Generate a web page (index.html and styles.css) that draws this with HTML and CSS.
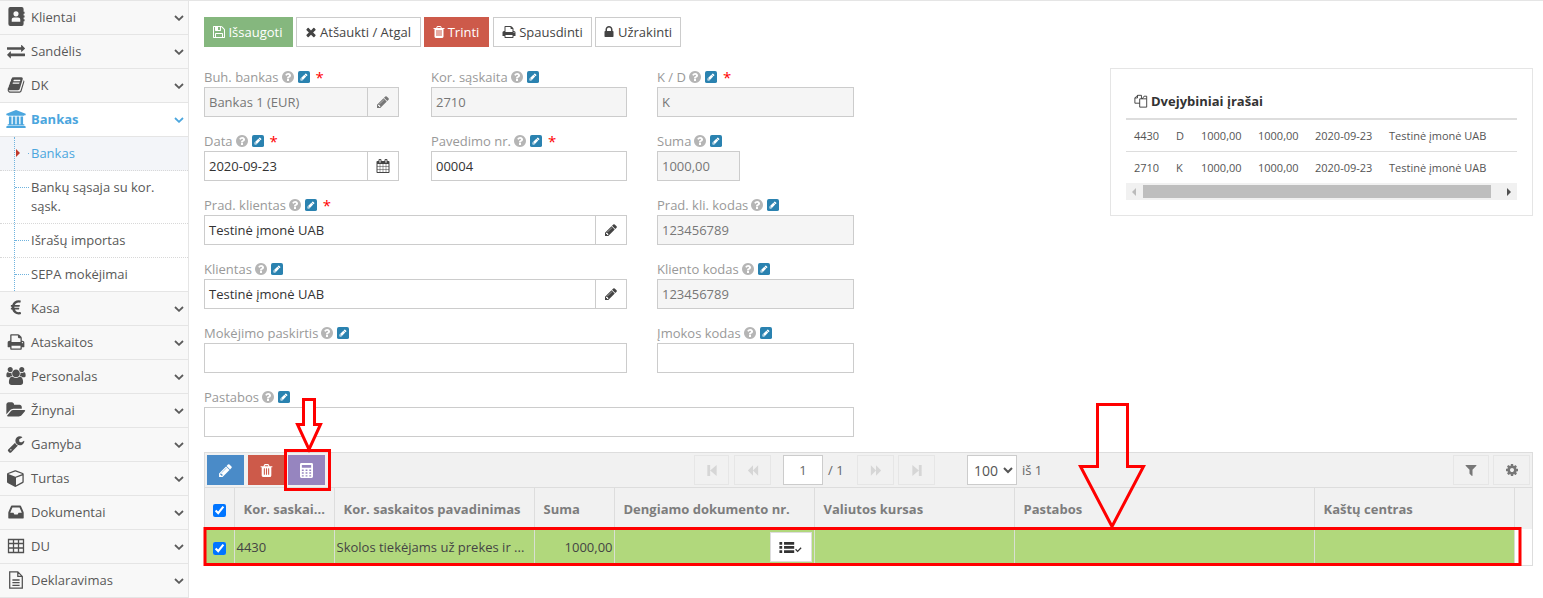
FILE: index.html
```html
<!DOCTYPE html>
<html lang="en">
<head>
    <meta charset="UTF-8">
    <title>Bankas</title>
    <link rel="stylesheet" href="styles.css">
</head>
<body>
    <svg class="defs" width="0" height="0">
        <symbol id="i-pencil" viewBox="0 0 1792 1792"><path d="M491 1536l91-91-235-235-91 91v107h128v128h107zm523-928q0-22-22-22-10 0-17 7l-542 542q-7 7-7 17 0 22 22 22 10 0 17-7l542-542q7-7 7-17zm-54-192l416 416-832 832h-416v-416zm683 96q0 53-37 90l-166 166-416-416 166-165q36-38 90-38 53 0 91 38l235 234q37 39 37 91z"/></symbol>
        <symbol id="i-edit" viewBox="0 0 1792 1792"><rect width="1792" height="1792" rx="280" fill="#2a82b0"/><path fill="#fff" transform="translate(290 270) scale(.68)" d="M491 1536l91-91-235-235-91 91v107h128v128h107zm469-1120l416 416-832 832h-416v-416zm683 96q0 53-37 90l-166 166-416-416 166-165q36-38 90-38 53 0 91 38l235 234q37 39 37 91z"/></symbol>
        <symbol id="i-help" viewBox="0 0 1792 1792"><path d="M1024 1376v-192q0-14-9-23t-23-9h-192q-14 0-23 9t-9 23v192q0 14 9 23t23 9h192q14 0 23-9t9-23zm256-672q0-88-55.500-163t-138.500-116-170-41q-243 0-371 213-15 24 8 42l132 100q7 6 19 6 16 0 25-12 53-68 86-92 34-24 86-24 48 0 85.500 26t37.500 59q0 38-20 61t-68 45q-63 28-115.500 86.500t-52.500 125.500v36q0 14 9 23t23 9h192q14 0 23-9t9-23q0-19 21.500-49.500t54.500-49.500q32-18 49-28.500t46-35 44.500-48 28-60.500 12.500-81zm384 192q0 209-103 385.500t-279.500 279.500-385.500 103-385.500-103-279.500-279.500-103-385.500 103-385.500 279.500-279.500 385.500-103 385.500 103 279.500 279.500 103 385.500z"/></symbol>
        <symbol id="i-save" viewBox="0 0 1792 1792"><path d="M512 1536h768v-384h-768v384zm896 0h128v-896q0-14-10-38.500t-20-34.500l-281-281q-10-10-34-20t-39-10v416q0 40-28 68t-68 28h-576q-40 0-68-28t-28-68v-416h-128v1280h128v-416q0-40 28-68t68-28h832q40 0 68 28t28 68v416zm-384-928v-320q0-13-9.500-22.500t-22.500-9.500h-192q-13 0-22.500 9.500t-9.500 22.500v320q0 13 9.500 22.500t22.500 9.500h192q13 0 22.500-9.500t9.500-22.500zm640 32v928q0 40-28 68t-68 28h-1344q-40 0-68-28t-28-68v-1344q0-40 28-68t68-28h928q40 0 88 20t76 48l280 280q28 28 48 76t20 88z"/></symbol>
        <symbol id="i-times" viewBox="0 0 1792 1792"><path d="M1490 1322q0 40-28 68l-136 136q-28 28-68 28t-68-28l-294-294-294 294q-28 28-68 28t-68-28l-136-136q-28-28-28-68t28-68l294-294-294-294q-28-28-28-68t28-68l136-136q28-28 68-28t68 28l294 294 294-294q28-28 68-28t68 28l136 136q28 28 28 68t-28 68l-294 294 294 294q28 28 28 68z"/></symbol>
        <symbol id="i-trash" viewBox="0 0 1792 1792"><path d="M704 1376v-704q0-14-9-23t-23-9h-64q-14 0-23 9t-9 23v704q0 14 9 23t23 9h64q14 0 23-9t9-23zm256 0v-704q0-14-9-23t-23-9h-64q-14 0-23 9t-9 23v704q0 14 9 23t23 9h64q14 0 23-9t9-23zm256 0v-704q0-14-9-23t-23-9h-64q-14 0-23 9t-9 23v704q0 14 9 23t23 9h64q14 0 23-9t9-23zm-544-992h448l-48-117q-7-9-17-11h-317q-10 2-17 11zm928 32v64q0 14-9 23t-23 9h-96v948q0 83-47 143.500t-113 60.500h-832q-66 0-113-58.500t-47-141.500v-952h-96q-14 0-23-9t-9-23v-64q0-14 9-23t23-9h309l70-167q15-37 54-63t79-26h320q40 0 79 26t54 63l70 167h309q14 0 23 9t9 23z"/></symbol>
        <symbol id="i-print" viewBox="0 0 1792 1792"><path d="M448 1536h896v-256h-896v256zm0-640h896v-384h-160q-40 0-68-28t-28-68v-160h-640v640zm1152 64q0-26-19-45t-45-19-45 19-19 45 19 45 45 19 45-19 19-45zm128 0v416q0 13-9.500 22.500t-22.500 9.500h-224v160q0 40-28 68t-68 28h-960q-40 0-68-28t-28-68v-160h-224q-13 0-22.500-9.500t-9.500-22.500v-416q0-79 56.500-135.500t135.500-56.500h64v-544q0-40 28-68t68-28h672q40 0 88 20t76 48l152 152q28 28 48 76t20 88v256h64q79 0 135.500 56.500t56.500 135.500z"/></symbol>
        <symbol id="i-lock" viewBox="0 0 1792 1792"><path d="M640 768h512v-192q0-106-75-181t-181-75-181 75-75 181v192zm832 96v576q0 40-28 68t-68 28h-960q-40 0-68-28t-28-68v-576q0-40 28-68t68-28h32v-192q0-184 132-316t316-132 316 132 132 316v192h32q40 0 68 28t28 68z"/></symbol>
        <symbol id="i-calendar" viewBox="0 0 1792 1792"><path d="M192 1664h288v-288h-288v288zm352 0h320v-288h-320v288zm-352-352h288v-320h-288v320zm352 0h320v-320h-320v320zm-352-384h288v-288h-288v288zm736 736h320v-288h-320v288zm-384-736h320v-288h-320v288zm768 736h288v-288h-288v288zm-384-352h320v-320h-320v320zm-352-864v-288q0-13-9.500-22.500t-22.500-9.500h-64q-13 0-22.500 9.500t-9.500 22.500v288q0 13 9.500 22.500t22.500 9.500h64q13 0 22.500-9.500t9.500-22.500zm736 864h288v-320h-288v320zm-384-384h320v-288h-320v288zm384 0h288v-288h-288v288zm32-480v-288q0-13-9.500-22.500t-22.500-9.500h-64q-13 0-22.500 9.500t-9.500 22.500v288q0 13 9.500 22.500t22.500 9.500h64q13 0 22.500-9.500t9.500-22.500zm384-64v1280q0 52-38 90t-90 38h-1408q-52 0-90-38t-38-90v-1280q0-52 38-90t90-38h128v-96q0-66 47-113t113-47h64q66 0 113 47t47 113v96h384v-96q0-66 47-113t113-47h64q66 0 113 47t47 113v96h128q52 0 90 38t38 90z"/></symbol>
        <symbol id="i-contact" viewBox="0 0 18 20"><path fill-rule="evenodd" d="M3 0h12a2 2 0 0 1 2 2v3h1v2h-1v2h1v2h-1v2h1v2h-1v3a2 2 0 0 1-2 2H3a2 2 0 0 1-2-2V2a2 2 0 0 1 2-2zm6 4.500a2.700 2.700 0 1 0 0 5.400 2.700 2.700 0 0 0 0-5.400zM4.500 15.500h9v-2.300c0-1.300-1-2.200-2.300-2.200H6.800c-1.300 0-2.300.9-2.300 2.200z"/></symbol>
        <symbol id="i-exchange" viewBox="0 0 1792 1792"><path d="M1792 1184v192q0 13-9.500 22.500t-22.500 9.500h-1376v192q0 13-9.500 22.500t-22.500 9.500q-12 0-24-10l-319-320q-9-9-9-22 0-14 9-23l320-320q9-9 23-9 13 0 22.500 9.500t9.500 22.500v192h1376q13 0 22.500 9.500t9.500 22.500zm0-544q0 14-9 23l-320 320q-9 9-23 9-13 0-22.500-9.500t-9.500-22.500v-192h-1376q-13 0-22.500-9.500t-9.500-22.500v-192q0-13 9.500-22.500t22.500-9.500h1376v-192q0-14 9-23t23-9q12 0 24 10l319 319q9 9 9 23z"/></symbol>
        <symbol id="i-book" viewBox="0 0 1792 1792"><path d="M1703 478q40 57 18 129l-275 906q-19 64-76.500 107.500t-122.500 43.500h-923q-77 0-148.500-53.500t-99.500-131.500q-24-67-2-127 0-4 3-27t4-37q1-8-3-21.500t-3-19.500q2-11 8-21t16.500-23.500 16.500-23.500q23-38 45-91.500t30-91.500q3-10 .5-30t-.5-28q3-11 17-28t17-23q21-36 42-92t25-90q1-9-2.500-32t.5-28q4-13 22-30.500t22-22.500q19-26 42.500-84.500t27.500-96.500q1-8-3-25.500t-2-26.500q2-8 9-18t18-23 17-21q8-12 16.500-30.500t15-35 16-36 19.500-32 26.500-23.500 36-11.500 47.500 5.500l-1 3q38-9 51-9h761q74 0 114 56t18 130l-274 906q-36 119-71.500 153.500t-128.500 34.500h-869q-27 0-38 15-11 16-1 43 24 70 144 70h923q29 0 56-15.500t35-41.500l300-987q7-22 5-57 38 15 59 43zm-1064 2q-4 13 2 22.500t20 9.500h608q13 0 25.500-9.500t16.500-22.500l21-64q4-13-2-22.500t-20-9.500h-608q-13 0-25.500 9.500t-16.500 22.500zm-83 256q-4 13 2 22.500t20 9.500h608q13 0 25.500-9.500t16.500-22.500l21-64q4-13-2-22.500t-20-9.500h-608q-13 0-25.500 9.500t-16.500 22.500z"/></symbol>
        <symbol id="i-bank" viewBox="0 0 1920 1792"><path d="M960 0l960 384v128h-128q0 26-20.500 45t-48.500 19h-1526q-28 0-48.500-19t-20.500-45h-128v-128zm-704 640h256v768h128v-768h256v768h128v-768h256v768h128v-768h256v768h59q28 0 48.500 19t20.500 45v64h-1664v-64q0-26 20.500-45t48.500-19h59v-768zm1595 960q28 0 48.500 19t20.500 45v128h-1920v-128q0-26 20.500-45t48.500-19h1782z"/></symbol>
        <symbol id="i-euro" viewBox="0 0 1792 1792"><path d="M1360 1307l35 159q3 12-3 22.500t-17 14.500l-5 1q-4 2-10.500 3.500t-16 4.500-21.500 5.500-25.500 5-30 5-33.500 4.500-36.500 3-38.500 1q-234 0-409-130.500t-238-351.500h-95q-13 0-22.500-9.500t-9.500-22.500v-113q0-13 9.500-22.500t22.500-9.500h66q-2-57 1-105h-67q-14 0-23-9t-9-23v-114q0-14 9-23t23-9h98q67-210 243.500-338t400.500-128q102 0 194 23 11 3 20 15 6 11 3 24l-43 159q-3 13-14 19.500t-24 2.500l-4-1q-4-1-11.500-2.500l-17.500-3.500-22.500-3.500-26-3-29-2.500-29.500-1q-126 0-226 64t-150 176h468q16 0 25 12 10 12 7 26l-24 114q-5 26-32 26h-488q-3 47 0 105h459q15 0 25 12 9 12 6 27l-24 112q-2 11-11 18.500t-20 7.500h-387q48 117 149.500 185.500t228.500 68.500q18 0 36-1.500t33.500-3.500 29.500-4.500 24.500-5 18.500-4.500l12-3 5-2q13-5 26 2 12 7 15 21z"/></symbol>
        <symbol id="i-users" viewBox="0 0 1920 1792"><path d="M593 896q-162 5-265 128h-134q-82 0-138-40.500t-56-118.500q0-353 124-353 6 0 43.500 21t97.500 42.500 119 21.500q67 0 133-23-5 37-5 66 0 139 81 256zm1071 637q0 120-73 189.500t-194 69.500h-874q-121 0-194-69.500t-73-189.500q0-53 3.500-103.500t14-109 26.500-108.500 43-97.500 62-81 85.500-53.500 111.500-20q10 0 43 21.500t73 48 107 48 135 21.500 135-21.500 107-48 73-48 43-21.500q61 0 111.500 20t85.500 53.500 62 81 43 97.500 26.500 108.500 14 109 3.500 103.500zm-1024-1277q0 106-75 181t-181 75-181-75-75-181 75-181 181-75 181 75 75 181zm704 384q0 159-112.500 271.500t-271.500 112.500-271.500-112.500-112.500-271.500 112.500-271.500 271.500-112.500 271.500 112.500 112.500 271.500zm576 225q0 78-56 118.500t-138 40.500h-134q-103-123-265-128 81-117 81-256 0-29-5-66 66 23 133 23 59 0 119-21.500t97.500-42.500 43.500-21q124 0 124 353zm-128-609q0 106-75 181t-181 75-181-75-75-181 75-181 181-75 181 75 75 181z"/></symbol>
        <symbol id="i-folder" viewBox="0 0 1920 1792"><path d="M1879 952q0 31-31 66l-336 396q-43 51-120.500 86.500t-143.500 35.500h-1088q-34 0-60.500-13t-26.500-43q0-31 31-66l336-396q43-51 120.500-86.500t143.500-35.500h1088q34 0 60.500 13t26.500 43zm-343-344v160h-832q-94 0-197 47.500t-164 119.500l-337 396-5 6q0-4-.5-12.500t-.5-12.500v-960q0-92 66-158t158-66h320q92 0 158 66t66 158v32h544q92 0 158 66t66 158z"/></symbol>
        <symbol id="i-wrench" viewBox="0 0 1792 1792"><path d="M448 1472q0-26-19-45t-45-19-45 19-19 45 19 45 45 19 45-19 19-45zm644-420l-682 682q-37 37-90 37-52 0-91-37l-106-108q-38-36-38-90 0-53 38-91l681-681q39 98 114.500 173.500t173.500 114.500zm634-435q0 39-23 106-47 134-164.500 217.500t-258.500 83.500q-185 0-316.500-131.500t-131.500-316.500 131.500-316.500 316.500-131.500q58 0 121.500 16.500t107.500 46.500q16 11 16 28t-16 28l-293 169v224l193 107q5-3 79-48.500t135.500-81 70.500-35.500q15 0 23.500 10t8.500 25z"/></symbol>
        <symbol id="i-cube" viewBox="0 0 1792 1792"><path d="M896 1629l640-349v-636l-640 233v752zm-64-865l698-254-698-254-698 254zm832-252v768q0 35-18 65t-49 47l-704 384q-28 16-61 16t-61-16l-704-384q-31-17-49-47t-18-65v-768q0-40 23-73t61-47l704-256q22-8 44-8t44 8l704 256q38 14 61 47t23 73z"/></symbol>
        <symbol id="i-inbox" viewBox="0 0 1792 1792"><path d="M1151 960h316q-1-3-2.500-8.500t-2.500-7.500l-212-496h-708l-212 496q-1 3-2.500 8.500t-2.500 7.500h316l95 192h320zm513 30v482q0 26-19 45t-45 19h-1408q-26 0-45-19t-19-45v-482q0-62 25-123l238-552q10-25 36.500-42t52.500-17h832q26 0 52.500 17t36.500 42l238 552q25 61 25 123z"/></symbol>
        <symbol id="i-table" viewBox="0 0 18 18"><path fill="none" stroke="currentColor" stroke-width="1.300" d="M1.500 2.500h15v13h-15zM1.500 6.500h15M1.500 11h15M6.500 2.500v13M11.500 2.500v13"/></symbol>
        <symbol id="i-file" viewBox="0 0 18 20"><path fill="none" stroke="currentColor" stroke-width="1.400" d="M2 1h9l5 5v13H2zM11 1v5h5M5 10h8M5 13h8M5 16h8"/></symbol>
        <symbol id="i-files" viewBox="0 0 16 16"><path fill="none" stroke="currentColor" stroke-width="1" d="M6.500 5.500h8v9.500h-8zM6.500 10.500H1V4.500L4 1.500h4.500v4M4 1.500v3H1M9.500 5.500l2-3h3v3"/></symbol>
        <symbol id="i-calc" viewBox="0 0 14 16"><path fill-rule="evenodd" d="M1.500 0h11A1.500 1.500 0 0 1 14 1.500v13a1.500 1.500 0 0 1-1.500 1.500h-11A1.500 1.500 0 0 1 0 14.500v-13A1.500 1.500 0 0 1 1.500 0zM2 2v3h10V2zm0 5v1.500h2V7zm4 0v1.500h2V7zm4 0v1.500h2V7zM2 10v1.500h2V10zm4 0v1.500h2V10zm4 0v1.500h2V10zM2 13v1.500h2V13zm4 0v1.500h2V13zm4 0v1.500h2V13z"/></symbol>
        <symbol id="i-first" viewBox="0 0 12 14"><path d="M1 1h3v12H1zM4 7l7-6v12z"/></symbol>
        <symbol id="i-prev" viewBox="0 0 14 14"><path d="M1 7l6-6v12zM7 7l6-6v12z"/></symbol>
        <symbol id="i-next" viewBox="0 0 14 14"><path d="M13 7L7 1v12zM7 7L1 1v12z"/></symbol>
        <symbol id="i-last" viewBox="0 0 12 14"><path d="M11 1H8v12h3zM8 7L1 1v12z"/></symbol>
        <symbol id="i-filter" viewBox="0 0 1792 1792"><path d="M1595 295q17 41-14 70l-493 493v742q0 42-39 59-13 5-25 5-27 0-45-19l-256-256q-19-19-19-45v-486l-493-493q-31-29-14-70 17-39 59-39h1280q42 0 59 39z"/></symbol>
        <symbol id="i-cog" viewBox="0 0 1792 1792"><path d="M1152 896q0-106-75-181t-181-75-181 75-75 181 75 181 181 75 181-75 75-181zm512-109v222q0 12-8 23t-20 13l-185 28q-19 54-39 91 35 50 107 138 10 12 10 25t-9 23q-27 37-99 108t-94 71q-12 0-26-9l-138-108q-44 23-91 38-16 136-29 186-7 28-36 28h-222q-14 0-24.500-8.500t-11.500-21.500l-28-184q-49-16-90-37l-141 107q-10 9-25 9-14 0-25-11-126-114-165-168-7-10-7-23 0-12 8-23 15-21 51-66.500t54-70.500q-27-50-41-99l-183-27q-13-2-21-12.500t-8-23.500v-222q0-12 8-23t19-13l186-28q14-46 39-92-40-57-107-138-10-12-10-24 0-10 9-23 26-36 98.500-107.500t94.500-71.500q13 0 26 10l138 107q44-23 91-38 16-136 29-186 7-28 36-28h222q14 0 24.500 8.500t11.500 21.500l28 184q49 16 90 37l142-107q9-9 24-9 13 0 25 10 129 119 165 170 7 8 7 22 0 12-8 23-15 21-51 66.500t-54 70.500q26 50 41 98l183 28q13 2 21 12.500t8 23.500z"/></symbol>
        <symbol id="i-listcheck" viewBox="0 0 24 13"><path d="M0 1h3v3H0zM5 1h11v3H5zM0 5.500h3v3H0zM5 5.500h11v3H5zM0 10h3v3H0zM5 10h11v3H5z"/><path fill="none" stroke="currentColor" stroke-width="1.400" d="M17.500 9l2.200 2.300 3.800-4"/></symbol>
        <symbol id="i-chev" viewBox="0 0 10 6"><path fill="none" stroke="currentColor" stroke-width="1.800" d="M1 1l4 3.800L9 1"/></symbol>
    </svg>

    <div class="page">
        <nav class="sidebar">
            <a class="nav-item"><span class="nav-icon"><svg class="ic-contact"><use href="#i-contact"/></svg></span>Klientai<svg class="chev"><use href="#i-chev"/></svg></a>
            <a class="nav-item"><span class="nav-icon"><svg><use href="#i-exchange"/></svg></span>Sandėlis<svg class="chev"><use href="#i-chev"/></svg></a>
            <a class="nav-item"><span class="nav-icon"><svg><use href="#i-book"/></svg></span>DK<svg class="chev"><use href="#i-chev"/></svg></a>
            <a class="nav-item open"><span class="nav-icon"><svg class="ic-wide"><use href="#i-bank"/></svg></span>Bankas<svg class="chev"><use href="#i-chev"/></svg></a>
            <div class="submenu">
                <a class="sub-item active">Bankas</a>
                <a class="sub-item">Bankų sąsaja su kor. sąsk.</a>
                <a class="sub-item">Išrašų importas</a>
                <a class="sub-item">SEPA mokėjimai</a>
            </div>
            <a class="nav-item"><span class="nav-icon"><svg><use href="#i-euro"/></svg></span>Kasa<svg class="chev"><use href="#i-chev"/></svg></a>
            <a class="nav-item"><span class="nav-icon"><svg><use href="#i-print"/></svg></span>Ataskaitos<svg class="chev"><use href="#i-chev"/></svg></a>
            <a class="nav-item"><span class="nav-icon"><svg class="ic-wide"><use href="#i-users"/></svg></span>Personalas<svg class="chev"><use href="#i-chev"/></svg></a>
            <a class="nav-item"><span class="nav-icon"><svg class="ic-wide"><use href="#i-folder"/></svg></span>Žinynai<svg class="chev"><use href="#i-chev"/></svg></a>
            <a class="nav-item"><span class="nav-icon"><svg><use href="#i-wrench"/></svg></span>Gamyba<svg class="chev"><use href="#i-chev"/></svg></a>
            <a class="nav-item"><span class="nav-icon"><svg><use href="#i-cube"/></svg></span>Turtas<svg class="chev"><use href="#i-chev"/></svg></a>
            <a class="nav-item"><span class="nav-icon"><svg><use href="#i-inbox"/></svg></span>Dokumentai<svg class="chev"><use href="#i-chev"/></svg></a>
            <a class="nav-item"><span class="nav-icon"><svg><use href="#i-table"/></svg></span>DU<svg class="chev"><use href="#i-chev"/></svg></a>
            <a class="nav-item"><span class="nav-icon"><svg><use href="#i-file"/></svg></span>Deklaravimas<svg class="chev"><use href="#i-chev"/></svg></a>
        </nav>

        <main class="content">
            <div class="actions">
                <button class="btn btn-save"><svg><use href="#i-save"/></svg>Išsaugoti</button>
                <button class="btn btn-cancel"><svg><use href="#i-times"/></svg>Atšaukti / Atgal</button>
                <button class="btn btn-delete"><svg><use href="#i-trash"/></svg>Trinti</button>
                <button class="btn btn-print"><svg><use href="#i-print"/></svg>Spausdinti</button>
                <button class="btn btn-lock"><svg><use href="#i-lock"/></svg>Užrakinti</button>
            </div>

            <div class="top-row">
                <div class="form-grid">
                    <div class="field">
                        <div class="label">Buh. bankas<svg class="q"><use href="#i-help"/></svg><svg class="e"><use href="#i-edit"/></svg><span class="req">*</span></div>
                        <div class="input-group w195 disabled"><div class="input">Bankas 1 (EUR)</div><span class="addon"><svg><use href="#i-pencil"/></svg></span></div>
                    </div>
                    <div class="field">
                        <div class="label">Kor. sąskaita<svg class="q"><use href="#i-help"/></svg><svg class="e"><use href="#i-edit"/></svg></div>
                        <div class="input w196 disabled">2710</div>
                    </div>
                    <div class="field">
                        <div class="label">K / D<svg class="q"><use href="#i-help"/></svg><svg class="e"><use href="#i-edit"/></svg><span class="req">*</span></div>
                        <div class="input w197 disabled">K</div>
                    </div>

                    <div class="field">
                        <div class="label">Data<svg class="q"><use href="#i-help"/></svg><svg class="e"><use href="#i-edit"/></svg><span class="req">*</span></div>
                        <div class="input-group w195"><div class="input">2020-09-23</div><span class="addon"><svg><use href="#i-calendar"/></svg></span></div>
                    </div>
                    <div class="field">
                        <div class="label">Pavedimo nr.<svg class="q"><use href="#i-help"/></svg><svg class="e"><use href="#i-edit"/></svg><span class="req">*</span></div>
                        <div class="input w196">00004</div>
                    </div>
                    <div class="field">
                        <div class="label">Suma<svg class="q"><use href="#i-help"/></svg><svg class="e"><use href="#i-edit"/></svg></div>
                        <div class="input w83 disabled">1000,00</div>
                    </div>

                    <div class="field span2">
                        <div class="label">Prad. klientas<svg class="q"><use href="#i-help"/></svg><svg class="e"><use href="#i-edit"/></svg><span class="req">*</span></div>
                        <div class="input-group w423"><div class="input">Testinė įmonė UAB</div><span class="addon"><svg><use href="#i-pencil"/></svg></span></div>
                    </div>
                    <div class="field">
                        <div class="label">Prad. kli. kodas<svg class="q"><use href="#i-help"/></svg><svg class="e"><use href="#i-edit"/></svg></div>
                        <div class="input w197 disabled">123456789</div>
                    </div>

                    <div class="field span2">
                        <div class="label">Klientas<svg class="q"><use href="#i-help"/></svg><svg class="e"><use href="#i-edit"/></svg></div>
                        <div class="input-group w423"><div class="input">Testinė įmonė UAB</div><span class="addon"><svg><use href="#i-pencil"/></svg></span></div>
                    </div>
                    <div class="field">
                        <div class="label">Kliento kodas<svg class="q"><use href="#i-help"/></svg><svg class="e"><use href="#i-edit"/></svg></div>
                        <div class="input w197 disabled">123456789</div>
                    </div>

                    <div class="field span2">
                        <div class="label">Mokėjimo paskirtis<svg class="q"><use href="#i-help"/></svg><svg class="e"><use href="#i-edit"/></svg></div>
                        <div class="input w423"></div>
                    </div>
                    <div class="field">
                        <div class="label">Įmokos kodas<svg class="q"><use href="#i-help"/></svg><svg class="e"><use href="#i-edit"/></svg></div>
                        <div class="input w197"></div>
                    </div>

                    <div class="field span3">
                        <div class="label">Pastabos<svg class="q"><use href="#i-help"/></svg><svg class="e"><use href="#i-edit"/></svg></div>
                        <div class="input"></div>
                    </div>
                </div>

                <aside class="entries">
                    <div class="entries-title"><svg><use href="#i-files"/></svg>Dvejybiniai įrašai</div>
                    <table class="entries-table">
                        <tr><td class="c1">4430</td><td class="c2">D</td><td class="c3">1000,00</td><td class="c3">1000,00</td><td class="c4">2020-09-23</td><td>Testinė įmonė UAB</td></tr>
                        <tr><td class="c1">2710</td><td class="c2">K</td><td class="c3">1000,00</td><td class="c3">1000,00</td><td class="c4">2020-09-23</td><td>Testinė įmonė UAB</td></tr>
                    </table>
                    <div class="scrollbar"><span class="arrow-l"></span><span class="thumb"></span><span class="arrow-r"></span></div>
                </aside>
            </div>

            <section class="grid-panel">
                <div class="grid-toolbar">
                    <div class="tool-group">
                        <button class="tool tool-blue"><svg><use href="#i-pencil"/></svg></button>
                        <button class="tool tool-red"><svg><use href="#i-trash"/></svg></button>
                        <button class="tool tool-purple"><svg class="ic-calc"><use href="#i-calc"/></svg></button>
                    </div>
                    <div class="pager">
                        <button class="page-btn page-first"><svg><use href="#i-first"/></svg></button>
                        <button class="page-btn page-prev"><svg><use href="#i-prev"/></svg></button>
                        <div class="page-input">1</div>
                        <span class="page-total">/ 1</span>
                        <button class="page-btn"><svg><use href="#i-next"/></svg></button>
                        <button class="page-btn page-last"><svg><use href="#i-last"/></svg></button>
                        <select class="page-size"><option>100</option></select>
                        <span class="page-count">iš 1</span>
                    </div>
                    <div class="tool-right">
                        <button class="page-btn dark"><svg><use href="#i-filter"/></svg></button>
                        <button class="page-btn dark"><svg><use href="#i-cog"/></svg></button>
                    </div>
                </div>
                <table class="grid">
                    <colgroup><col class="col-check"><col class="col-acc"><col class="col-name"><col class="col-sum"><col class="col-doc"><col class="col-rate"><col class="col-note"><col class="col-cost"></colgroup>
                    <thead>
                        <tr>
                            <th class="cell-check"><input type="checkbox" checked></th>
                            <th>Kor. saskai...</th>
                            <th>Kor. saskaitos pavadinimas</th>
                            <th>Suma</th>
                            <th>Dengiamo dokumento nr.</th>
                            <th>Valiutos kursas</th>
                            <th>Pastabos</th>
                            <th>Kaštų centras</th>
                        </tr>
                    </thead>
                    <tbody>
                        <tr>
                            <td class="cell-check"><input type="checkbox" checked></td>
                            <td>4430</td>
                            <td>Skolos tiekėjams už prekes ir ...</td>
                            <td class="num">1000,00</td>
                            <td class="cell-btn"><button class="doc-btn"><svg><use href="#i-listcheck"/></svg></button></td>
                            <td></td>
                            <td></td>
                            <td></td>
                        </tr>
                    </tbody>
                </table>
            </section>
        </main>
    </div>

    <!-- red marks drawn over the screenshot -->
    <svg class="marks" width="1543" height="598">
        <g fill="none" stroke="#f00" stroke-width="3">
            <path fill="#fff" d="M303.500 399.500h11v25h6l-11.500 25-11.500-25h6z"/>
            <path d="M285.500 450.500h44v39h-44z"/>
            <path d="M1097.500 404.500h30v62h16l-31.500 60-31.500-60h17z"/>
            <path d="M205 528.500h1315v36H205z"/>
        </g>
    </svg>
</body>
</html>
```

FILE: styles.css
```css
* {
    box-sizing: border-box;
}

html, body {
    margin: 0;
    height: 598px;
    overflow: hidden;
}

body {
    position: relative;
    background: white;
    color: #444;
    font-family: 'Open Sans', sans-serif;
    font-size: 13px;
}

svg {
    fill: currentColor;
}

.defs {
    position: absolute;
}

.page {
    display: flex;
    height: 598px;
    border-top: 1px solid #e5e5e5;
}

/* Sidebar */
.sidebar {
    width: 189px;
    flex: none;
    background: #f8f8f8;
    border-right: 1px solid #e5e5e5;
}

.nav-item {
    display: flex;
    align-items: center;
    height: 34px;
    padding: 0 0 2px 6px;
    border-bottom: 1px solid #e5e5e5;
    color: #585858;
}

.nav-icon {
    width: 25px;
    flex: none;
    display: flex;
    align-items: center;
    justify-content: flex-start;
    color: #505050;
}

.nav-icon svg {
    width: 18px;
    height: 18px;
    margin-left: 1px;
}

.nav-icon .ic-wide {
    width: 20px;
    margin-left: 0;
}

.nav-icon .ic-contact {
    height: 19px;
    margin-left: 1px;
}

.chev {
    width: 10px;
    height: 6px;
    margin-left: auto;
    margin-right: 4px;
    margin-top: 3px;
    color: #5a5a5a;
}

.nav-item.open {
    background: white;
    color: #4ba6de;
    font-weight: bold;
}

.nav-item.open .nav-icon,
.nav-item.open .chev {
    color: #4ba6de;
}

.submenu {
    position: relative;
    background: white;
    border-bottom: 1px solid #e5e5e5;
}

.submenu::before {
    content: '';
    position: absolute;
    z-index: 1;
    left: 14px;
    top: 0;
    bottom: 0;
    border-left: 1px dotted #6fb3de;
}

.sub-item {
    position: relative;
    display: block;
    padding: 7px 8px 7px 31px;
    line-height: 19px;
    color: #585858;
    border-bottom: 1px dotted #d8d8d8;
}

.sub-item:last-child {
    border-bottom: none;
}

.sub-item::before {
    content: '';
    position: absolute;
    left: 15px;
    top: 16px;
    width: 14px;
    border-top: 1px dotted #6fb3de;
}

.sub-item.active {
    background: #f3f5f9;
    color: #4ba6de;
}

.sub-item.active::before {
    left: 28px;
    width: 1px;
}

.sub-item.active::after {
    content: '';
    position: absolute;
    left: 16px;
    top: 12px;
    border-left: 4px solid #c0392b;
    border-top: 4px solid transparent;
    border-bottom: 4px solid transparent;
}

/* Main area */
.content {
    flex: 1;
    min-width: 0;
    padding: 16px 10px 0 15px;
}

.actions {
    display: flex;
    gap: 3px;
    height: 30px;
    margin-bottom: 20px;
}

.btn {
    display: flex;
    align-items: center;
    justify-content: center;
    gap: 2px;
    height: 30px;
    padding: 0 2px 0 0;
    border: 1px solid #ccc;
    background: white;
    color: #444;
    font: inherit;
}

.btn svg {
    width: 14px;
    height: 14px;
}

.btn-save {
    width: 89px;
    background: #85b77e;
    border-color: #85b77e;
    color: white;
}

.btn-cancel { width: 125px; }

.btn-delete {
    width: 65px;
    background: #cd5a4a;
    border-color: #cd5a4a;
    color: white;
}

.btn-print {
    width: 99px;
    margin-left: 1px;
    gap: 3px;
    padding: 0;
}

.btn-lock { width: 86px; }

.top-row {
    display: flex;
}

.form-grid {
    display: grid;
    grid-template-columns: 227px 226px 197px;
    grid-auto-rows: 50px;
    row-gap: 14px;
    width: 650px;
}

.span2 { grid-column: span 2; }
.span3 { grid-column: span 3; }

.label {
    display: flex;
    align-items: center;
    height: 20px;
    color: #999;
}

.label .q {
    width: 14px;
    height: 14px;
    margin-left: 2px;
    color: #b5b5b5;
}

.label .e {
    width: 12px;
    height: 12px;
    margin-left: 3px;
}

.req {
    margin-left: 6px;
    color: #f00;
    font-size: 15px;
    line-height: 20px;
}

.input {
    height: 30px;
    padding-left: 4px;
    border: 1px solid #ccc;
    background: white;
    color: #333;
    line-height: 28px;
    white-space: nowrap;
}

.input.disabled,
.input-group.disabled .input,
.input-group.disabled .addon {
    background: #f5f5f5;
    color: #777;
}

.w83 { width: 83px; }
.w195 { width: 195px; }
.w196 { width: 196px; }
.w197 { width: 197px; }
.w423 { width: 423px; }

.input-group {
    display: flex;
}

.input-group .input {
    flex: 1;
    min-width: 0;
}

.addon {
    display: flex;
    align-items: center;
    justify-content: center;
    width: 31px;
    height: 30px;
    flex: none;
    border: 1px solid #ccc;
    border-left: none;
    color: #444;
}

.addon svg {
    width: 14px;
    height: 14px;
}

.input-group.disabled .addon svg {
    color: #777;
}

/* Double entry panel */
.entries {
    width: 423px;
    height: 148px;
    margin-top: 1px;
    margin-left: auto;
    padding: 16px 15px 15px;
    border: 1px solid #e5e5e5;
}

.entries-title {
    display: flex;
    align-items: center;
    gap: 3px;
    height: 35px;
    padding: 0 0 2px 8px;
    border-bottom: 2px solid #ddd;
    color: #333;
    font-weight: bold;
}

.entries-title svg {
    width: 14px;
    height: 14px;
}

.entries-table {
    width: 391px;
    border-collapse: collapse;
    table-layout: fixed;
    font-size: 11px;
    color: #555;
}

.entries-table td {
    height: 32px;
    padding: 0 0 0 8px;
    white-space: nowrap;
}

.entries-table tr:first-child td {
    height: 31px;
    border-bottom: 1px solid #ddd;
}

.entries-table .c1 { width: 42px; }
.entries-table .c2 { width: 25px; }
.entries-table .c3 { width: 57px; }
.entries-table .c4 { width: 74px; }

.scrollbar {
    display: flex;
    align-items: center;
    height: 17px;
    padding: 0 6px;
    background: #f1f1f1;
}

.thumb {
    width: 348px;
    height: 13px;
    margin-left: 7px;
    background: #bebebe;
}

.arrow-l {
    border-right: 4px solid #bbb;
    border-top: 4px solid transparent;
    border-bottom: 4px solid transparent;
}

.arrow-r {
    margin-left: auto;
    border-left: 4px solid #505050;
    border-top: 4px solid transparent;
    border-bottom: 4px solid transparent;
}

/* Lines grid */
.grid-panel {
    width: 1329px;
    height: 114px;
    margin-top: 15px;
    border: 1px solid #ddd;
    background: linear-gradient(#f1f1f1 76px, white 76px);
}

.grid-toolbar {
    display: flex;
    align-items: flex-start;
    height: 35px;
    padding: 2px 2px 0;
    border-bottom: 1px solid #ddd;
}

.tool-group {
    display: flex;
    gap: 4px;
}

.tool {
    display: flex;
    align-items: center;
    justify-content: center;
    width: 37px;
    height: 30px;
    border: none;
    padding: 0;
    color: white;
}

.tool svg {
    width: 15px;
    height: 15px;
}

.tool .ic-calc {
    width: 13px;
    height: 15px;
}

.tool-blue { background: #4a8bc8; }
.tool-red { background: #cd5a4a; margin-right: -1px; }
.tool-purple { background: #9685bf; }

.pager {
    display: flex;
    align-items: center;
    height: 30px;
    margin-left: 369px;
    color: #666;
}

.page-btn {
    display: flex;
    align-items: center;
    justify-content: center;
    width: 37px;
    height: 30px;
    padding: 0;
    margin-right: 4px;
    border: 1px solid #e6e6e6;
    background: #f1f1f1;
    color: #d6d6d6;
}

.page-btn svg {
    width: 12px;
    height: 13px;
}

.page-first { width: 35px; margin-right: 5px; }
.page-prev { margin-right: 12px; }
.page-last { margin-right: 32px; }

.page-input {
    width: 40px;
    height: 30px;
    border: 1px solid #ccc;
    background: white;
    text-align: center;
    line-height: 28px;
}

.page-total {
    width: 34px;
    padding-left: 5px;
}

.page-size {
    width: 50px;
    height: 30px;
    padding: 0 0 0 2px;
    border: 1px solid #ccc;
    border-radius: 0;
    background: white;
    color: #555;
    font: inherit;
    font-size: 14px;
}

.page-count {
    margin-left: 5px;
}

.tool-right {
    display: flex;
    margin-left: auto;
}

.tool-right .page-btn {
    width: 36px;
    color: #777;
}

.tool-right .page-btn:last-child {
    width: 37px;
    margin-right: 0;
}

.tool-right .page-btn svg {
    width: 14px;
    height: 14px;
}

table.grid {
    width: 1310px;
    margin-left: -1px;
    border-collapse: collapse;
    table-layout: fixed;
}

.col-check { width: 30px; }
.col-acc { width: 100px; }
.col-name { width: 200px; }
.col-sum { width: 80px; }
.col-doc { width: 200px; }
.col-rate { width: 200px; }
.col-note { width: 300px; }
.col-cost { width: 200px; }

.grid th {
    height: 41px;
    padding: 0 8px 0 9px;
    border-right: 1px solid #ddd;
    color: #7d7d7d;
    text-align: left;
    white-space: nowrap;
}

.grid td {
    height: 36px;
    padding: 0 2px;
    background: #b1d87c;
    border-right: 1px solid #d9dfd2;
    color: #444;
    white-space: nowrap;
}

.grid .cell-check {
    padding: 0 0 0 1px;
    text-align: center;
}

.grid input {
    margin: 0;
    vertical-align: middle;
}

.grid .num {
    padding-right: 1px;
    text-align: right;
}

.grid .cell-btn {
    text-align: right;
}

.doc-btn {
    display: inline-flex;
    align-items: center;
    justify-content: center;
    width: 42px;
    height: 30px;
    padding: 0;
    border: 1px solid #ddd;
    background: white;
    color: #333;
    vertical-align: middle;
}

.doc-btn svg {
    width: 23px;
    height: 12px;
}

/* Red annotations */
.marks {
    position: absolute;
    left: 0;
    top: 0;
    pointer-events: none;
}
```
